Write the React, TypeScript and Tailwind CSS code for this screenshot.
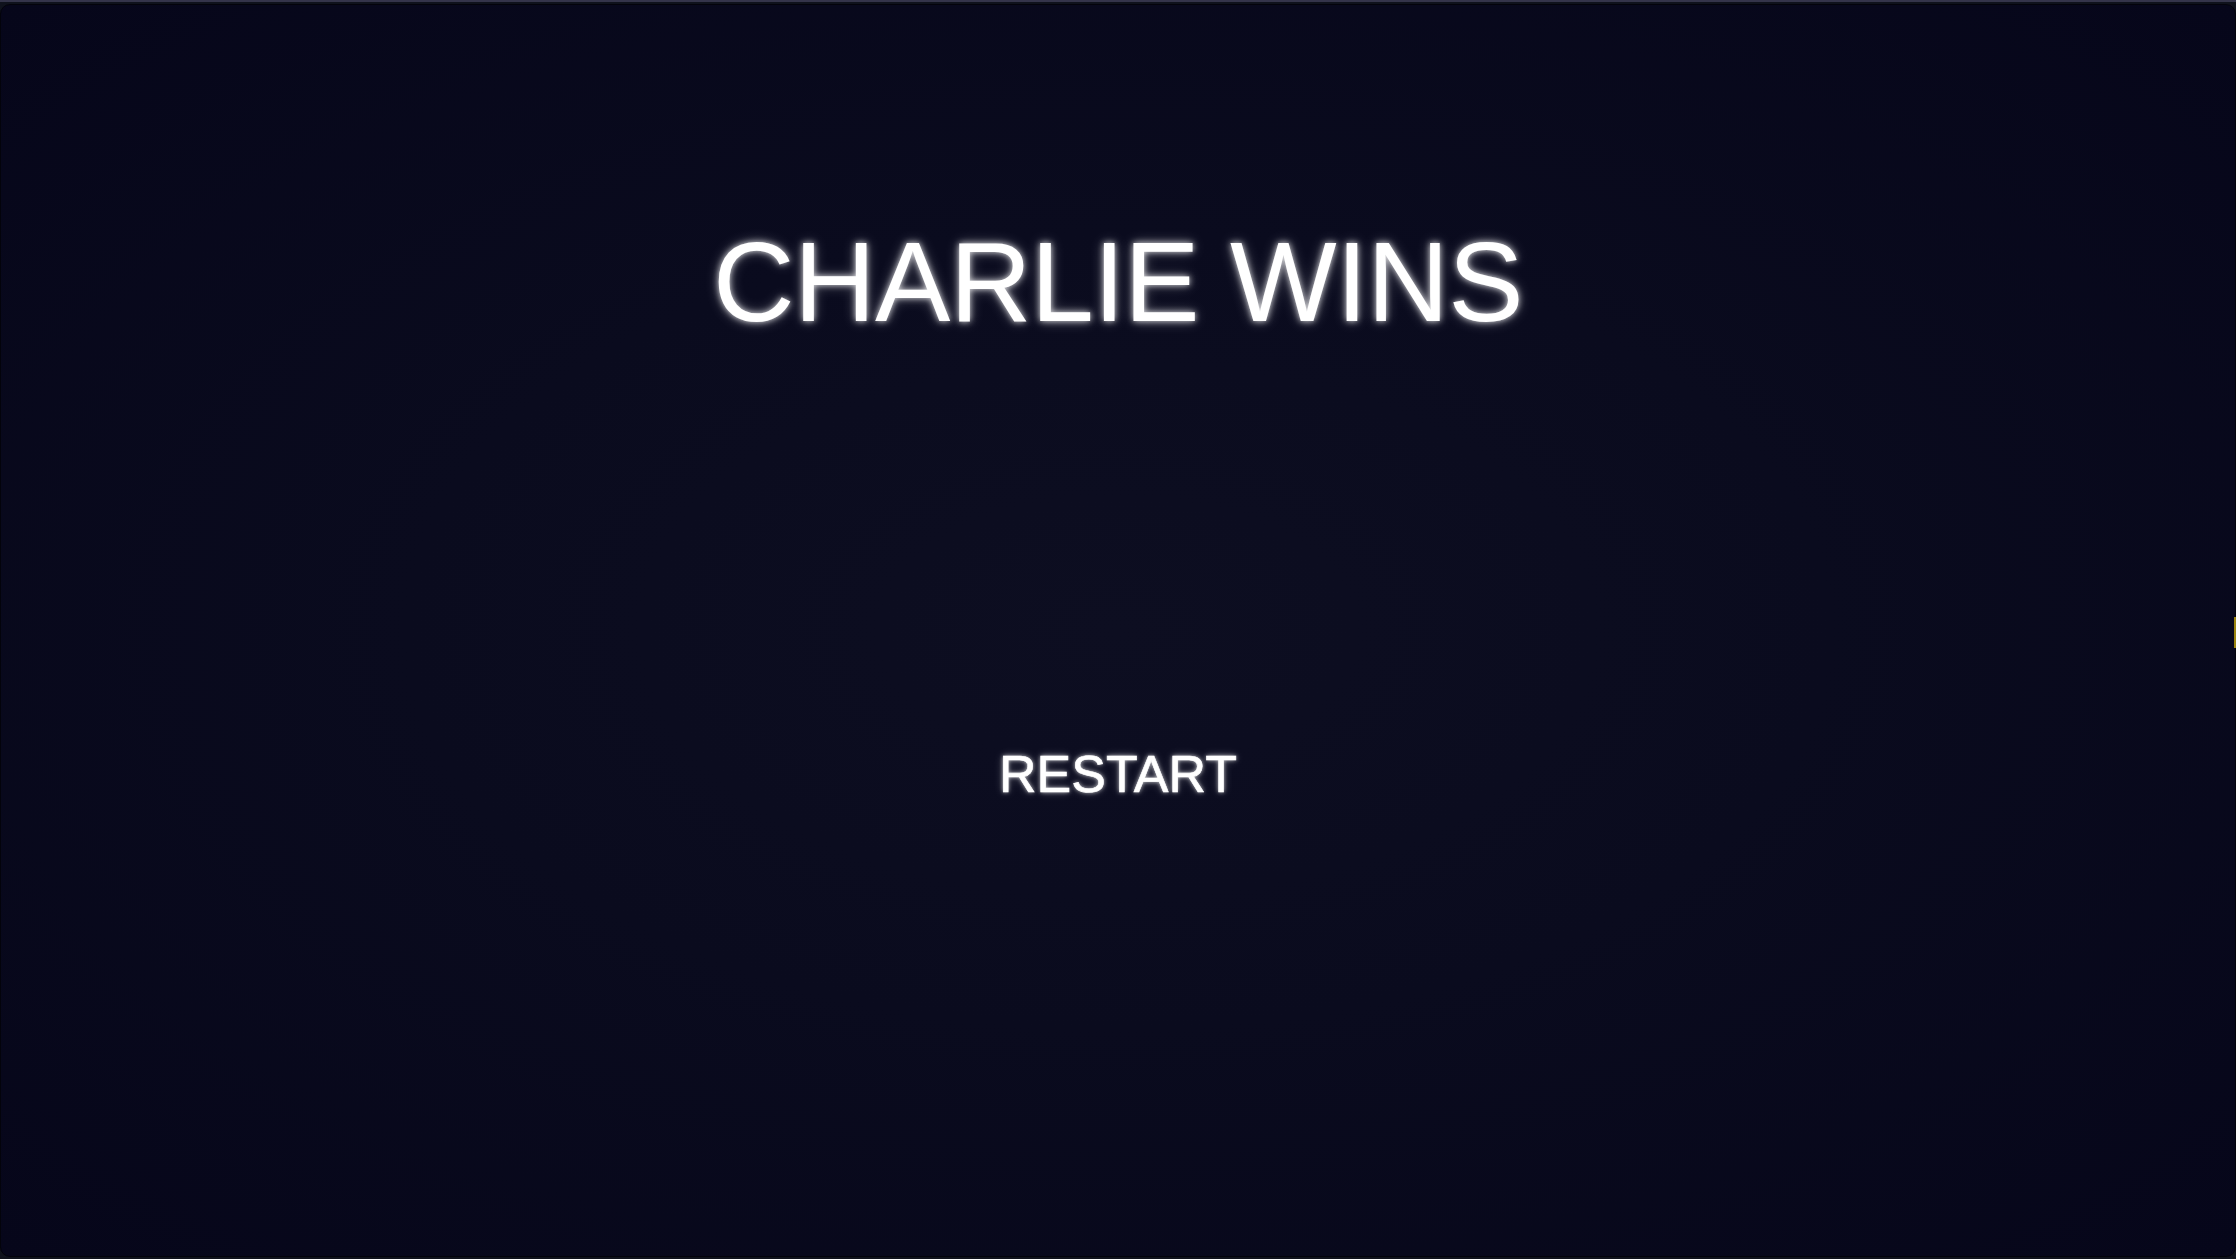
import React from "react";

export default function App() {
  return (
    <div className="w-[2236px] h-[1259px] bg-[#0f121c] flex flex-col overflow-hidden" style={{ fontFamily: '"Liberation Sans", Arial, sans-serif' }}>
      <div className="h-[2px] bg-[#34344a] shrink-0" />
      <div className="relative flex-1 mt-[2px] mb-[2px] rounded-[10px] border border-[#03030b] bg-[radial-gradient(ellipse_at_center,#0d0e21_0%,#0a0b1e_45%,#06061a_100%)] flex flex-col items-center">
        <h1 className="mt-[221px] text-[113px] leading-none text-white font-normal tracking-[-0.5px] [text-shadow:0_0_6px_rgba(255,255,255,0.85),0_0_14px_rgba(255,255,255,0.35)]">
          CHARLIE WINS
        </h1>
        <button className="mt-[409px] text-[52px] leading-none text-white font-normal [-webkit-text-stroke:0.6px_white] [text-shadow:0_0_4px_rgba(255,255,255,0.8),0_0_10px_rgba(255,255,255,0.3)]">
          RESTART
        </button>
        <div className="absolute right-[-1px] top-[612px] w-[2px] h-[31px] bg-[#9a8410]" />
      </div>
    </div>
  );
}
